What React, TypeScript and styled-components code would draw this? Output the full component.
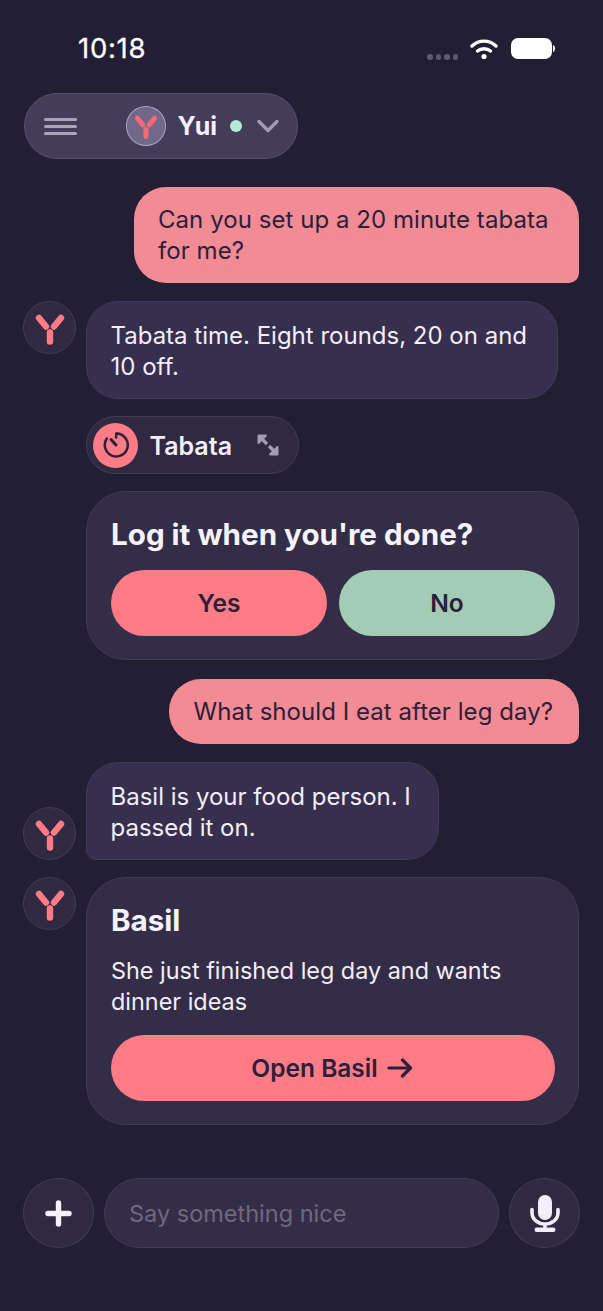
import React from "react";
import styled, { createGlobalStyle } from "styled-components";

const Global = createGlobalStyle`
  html, body { margin: 0; padding: 0; background: #221e33; }
  * { box-sizing: border-box; }
`;

const Screen = styled.div`
  width: 603px;
  height: 1311px;
  background: #221e33;
  font-family: Inter, "Liberation Sans", sans-serif;
  display: flex;
  flex-direction: column;
  overflow: hidden;
  color: #f3eefa;
`;

const StatusBar = styled.div`
  height: 93px;
  display: flex;
  justify-content: space-between;
  padding: 33px 48px 0 78px;
  align-items: flex-start;
`;

const Time = styled.div`
  font-size: 27.5px;
  line-height: 31px;
  font-weight: 400;
  letter-spacing: 0.7px;
  color: #fff;
  -webkit-text-stroke: 0.3px #fff;
`;

const StatusIcons = styled.div`
  display: flex;
  align-items: flex-start;
  gap: 13px;
  margin-top: 4.5px;
`;

const Dots = styled.div`
  display: flex;
  gap: 3px;
  margin-top: 16.5px;
  margin-right: -1px;
`;

const Dot = styled.span`
  width: 5.5px;
  height: 5.5px;
  border-radius: 50%;
  background: #5f5970;
`;

const Header = styled.div`
  margin-left: 24px;
  width: 274px;
  height: 66px;
  border-radius: 33px;
  background: #433d59;
  border: 1.5px solid #58526e;
  display: flex;
  align-items: center;
  padding: 0 18px 0 19px;
  flex: none;
`;

const Menu = styled.div`
  width: 33px;
  display: flex;
  flex-direction: column;
  gap: 4px;
  margin-right: 49px;
`;

const MenuBar = styled.span`
  height: 3px;
  background: #aba5ba;
  border-radius: 2px;
`;

const HeaderAvatar = styled.div`
  width: 40px;
  height: 40px;
  border-radius: 50%;
  background: #706989;
  border: 1.5px solid #aaa4c0;
  display: flex;
  align-items: center;
  justify-content: center;
  margin-right: 11.5px;
`;

const Name = styled.span`
  font-size: 25px;
  font-weight: 700;
  color: #f5f0fb;
  margin-right: 13px;
`;

const Online = styled.span`
  width: 12px;
  height: 12px;
  border-radius: 50%;
  background: #b2ecd9;
  margin-right: 15px;
`;

const Thread = styled.div`
  display: flex;
  flex-direction: column;
  padding: 28px 24px 0 23px;
  flex: none;
  height: 1019px;
`;

const Row = styled.div<{ $gap?: number; $align?: string }>`
  display: flex;
  align-items: ${(p) => p.$align ?? "flex-start"};
  gap: 10px;
  margin-top: ${(p) => p.$gap ?? 18}px;
`;

const UserRow = styled(Row)`
  justify-content: flex-end;
`;

const UserBubble = styled.div<{ $width?: number }>`
  width: ${(p) => (p.$width ? `${p.$width}px` : "auto")};
  background: #f38b94;
  color: #2b2038;
  font-size: 24px;
  letter-spacing: 0.05px;
  line-height: 31px;
  padding: 17px 26px 17px 24px;
  border-radius: 32px 32px 10px 32px;
`;

const BotBubble = styled.div<{ $width: number; $tail?: boolean }>`
  width: ${(p) => p.$width}px;
  background: #372f4e;
  border: 1.5px solid #413a58;
  color: #f3eefa;
  font-size: 24px;
  line-height: 31px;
  padding: 18px 24px 16px 23.5px;
  border-radius: ${(p) => (p.$tail ? "32px 32px 32px 10px" : "32px")};
`;

const AvatarCircle = styled.div`
  width: 53px;
  height: 53px;
  flex: none;
  border-radius: 50%;
  background: #2f2941;
  border: 1.5px solid #423c56;
  display: flex;
  align-items: center;
  justify-content: center;
`;

const Indented = styled.div<{ $gap?: number }>`
  margin-left: 63px;
  margin-top: ${(p) => p.$gap ?? 17}px;
`;

const Chip = styled.div`
  width: 213px;
  height: 58px;
  border-radius: 29px;
  background: #2f2941;
  border: 1.5px solid #423c56;
  display: flex;
  align-items: center;
  padding-left: 6px;
`;

const ChipIcon = styled.div`
  width: 45px;
  height: 45px;
  border-radius: 50%;
  background: #ff7b86;
  display: flex;
  align-items: center;
  justify-content: center;
  margin-right: 11.5px;
`;

const ChipLabel = styled.span`
  font-size: 25px;
  font-weight: 600;
  color: #f3eefa;
  margin-right: 25px;
  padding-top: 2px;
`;

const Card = styled.div<{ $height: number }>`
  width: 493px;
  height: ${(p) => p.$height}px;
  flex: none;
  background: #332d47;
  border: 1.5px solid #413b56;
  border-radius: 40px;
  padding: 24px 23px 24px 24px;
  display: flex;
  flex-direction: column;
`;

const CardTitle = styled.div`
  font-size: 29.6px;
  line-height: 36px;
  font-weight: 700;
  color: #f7f3fc;
`;

const CardBody = styled.div`
  font-size: 23.4px;
  line-height: 31px;
  margin-top: 17px;
  color: #f3eefa;
`;

const ButtonRow = styled.div`
  display: flex;
  gap: 12px;
  margin-top: 18px;
`;

const Pill = styled.div<{ $bg: string; $top?: number }>`
  height: 66px;
  border-radius: 33px;
  background: ${(p) => p.$bg};
  color: #2b2038;
  font-size: 24.5px;
  font-weight: 600;
  display: flex;
  align-items: center;
  justify-content: center;
  gap: 9px;
  margin-top: ${(p) => p.$top ?? 0}px;
  flex: ${(p) => (p.$top ? "none" : 1)};
`;

const Composer = styled.div`
  display: flex;
  gap: 10px;
  padding: 0 23px;
`;

const RoundButton = styled.div`
  width: 71px;
  height: 70px;
  border-radius: 50%;
  background: #2f2941;
  border: 1.5px solid #423c56;
  display: flex;
  align-items: center;
  justify-content: center;
  flex: none;
`;

const Input = styled.div`
  flex: 1;
  height: 70px;
  border-radius: 35px;
  background: #332d47;
  border: 1.5px solid #423c56;
  display: flex;
  align-items: center;
  padding-left: 24px;
  font-size: 23.5px;
  color: #6f697f;
`;

const Logo = ({ size = 36, color = "#ff7b86" }: { size?: number; color?: string }) => (
  <svg width={size} height={size} viewBox="0 0 36 36" fill="none" stroke={color} strokeWidth="6.4" strokeLinecap="round">
    <path d="M18 22.5 V31.5" />
    <path d="M7 8 L14 16.5" />
    <path d="M29 8 L22 16.5" />
  </svg>
);

const Wifi = () => (
  <svg width="28" height="22" viewBox="0 0 28 22" fill="none" stroke="#fff" strokeWidth="3.4" strokeLinecap="round">
    <path d="M2 8 C9 1.5 19 1.5 26 8" />
    <path d="M7.5 13 C11 10 17 10 20.5 13" />
    <circle cx="14" cy="18.5" r="2.6" fill="#fff" stroke="none" />
  </svg>
);

const Battery = () => (
  <svg width="44" height="21" viewBox="0 0 44 21">
    <rect x="0" y="0" width="41" height="21" rx="7" fill="#fff" />
    <path d="M42 7 C43.5 7.5 44 9 44 10.5 C44 12 43.5 13.5 42 14 Z" fill="#fff" />
  </svg>
);

const Chevron = () => (
  <svg width="22" height="14" viewBox="0 0 22 14" fill="none" stroke="#a29bb2" strokeWidth="3.4" strokeLinecap="round" strokeLinejoin="round">
    <path d="M2 2.5 L11 11.5 L20 2.5" />
  </svg>
);

const Timer = () => (
  <svg width="28" height="28" viewBox="0 0 28 28" fill="none" stroke="#2b2038" strokeWidth="2.5" strokeLinecap="round">
    <path d="M14.5 2.5 A 11.5 11.5 0 1 1 4.8 7.5" />
    <path d="M14.5 2.5 L14 6.5" />
    <path d="M9 8.5 L14 14" strokeWidth="3" />
  </svg>
);

const Expand = () => (
  <svg width="22" height="22" viewBox="0 0 22 22" fill="#a29cb0" stroke="#a29cb0" strokeWidth="3.4" strokeLinejoin="round">
    <path d="M1.5 1.5 H9 L1.5 9 Z" strokeWidth="2" />
    <path d="M4 4 L10 10" />
    <path d="M20.5 20.5 H13 L20.5 13 Z" strokeWidth="2" />
    <path d="M18 18 L12 12" />
  </svg>
);

const Arrow = () => (
  <svg width="28" height="20" viewBox="0 0 28 20" fill="none" stroke="#2b2038" strokeWidth="3.2" strokeLinecap="round" strokeLinejoin="round">
    <path d="M2 10 H23" />
    <path d="M15.5 2 L23.5 10 L15.5 18" />
  </svg>
);

const Plus = () => (
  <svg width="27" height="27" viewBox="0 0 27 27" fill="none" stroke="#f5f0fb" strokeWidth="5.4" strokeLinecap="round">
    <path d="M13.5 3 V24 M3 13.5 H24" />
  </svg>
);

const Mic = () => (
  <svg width="30" height="37" viewBox="0 0 30 37">
    <rect x="8" y="0" width="14" height="25" rx="7" fill="#f3eefa" />
    <path d="M2 14.5 V17.5 C2 24.5 8 29 15 29 C22 29 28 24.5 28 17.5 V14.5" fill="none" stroke="#f3eefa" strokeWidth="3.6" strokeLinecap="round" />
    <path d="M15 29 V34" stroke="#f3eefa" strokeWidth="3.6" />
    <rect x="4.5" y="32.5" width="21" height="4.5" rx="2.2" fill="#f3eefa" />
  </svg>
);

export default function App() {
  return (
    <Screen>
      <Global />
      <StatusBar>
        <Time>10:18</Time>
        <StatusIcons>
          <Dots><Dot /><Dot /><Dot /><Dot /></Dots>
          <Wifi />
          <Battery />
        </StatusIcons>
      </StatusBar>
      <Header>
        <Menu><MenuBar /><MenuBar /><MenuBar /></Menu>
        <HeaderAvatar><Logo size={28} color="#f86a76" /></HeaderAvatar>
        <Name>Yui</Name>
        <Online />
        <Chevron />
      </Header>
      <Thread>
        <UserRow $gap={0}>
          <UserBubble $width={445}>Can you set up a 20 minute tabata for me?</UserBubble>
        </UserRow>
        <Row>
          <AvatarCircle><Logo size={36} /></AvatarCircle>
          <BotBubble $width={472}>Tabata time. Eight rounds, 20 on and 10 off.</BotBubble>
        </Row>
        <Indented>
          <Chip>
            <ChipIcon><Timer /></ChipIcon>
            <ChipLabel>Tabata</ChipLabel>
            <Expand />
          </Chip>
        </Indented>
        <Indented>
          <Card $height={169}>
            <CardTitle>Log it when you're done?</CardTitle>
            <ButtonRow>
              <Pill $bg="#ff7b86">Yes</Pill>
              <Pill $bg="#a2ccb6">No</Pill>
            </ButtonRow>
          </Card>
        </Indented>
        <UserRow $gap={19}>
          <UserBubble>What should I eat after leg day?</UserBubble>
        </UserRow>
        <Row $align="flex-end">
          <AvatarCircle><Logo size={36} /></AvatarCircle>
          <BotBubble $width={353} $tail>Basil is your food person. I passed it on.</BotBubble>
        </Row>
        <Row $gap={17}>
          <AvatarCircle><Logo size={36} /></AvatarCircle>
          <Card $height={248}>
            <CardTitle>Basil</CardTitle>
            <CardBody>She just finished leg day and wants dinner ideas</CardBody>
            <Pill $bg="#ff7b86" $top={18}>Open Basil <Arrow /></Pill>
          </Card>
        </Row>
      </Thread>
      <Composer>
        <RoundButton><Plus /></RoundButton>
        <Input>Say something nice</Input>
        <RoundButton><Mic /></RoundButton>
      </Composer>
    </Screen>
  );
}
